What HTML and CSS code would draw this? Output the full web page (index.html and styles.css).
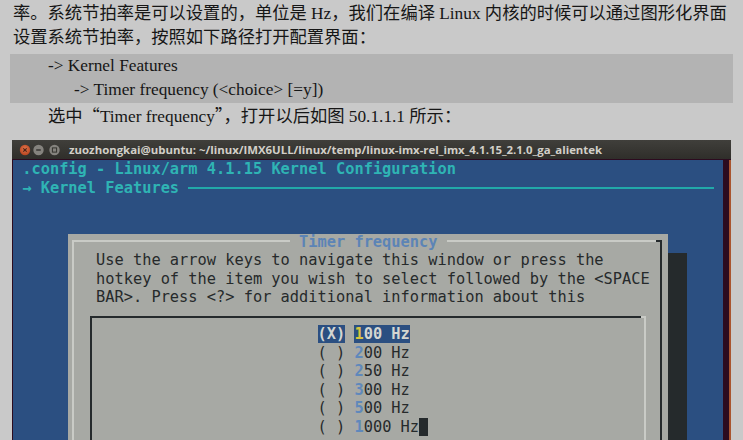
FILE: index.html
```html
<!DOCTYPE html>
<html lang="zh">
<head>
<meta charset="utf-8">
<title>Timer frequency</title>
<link rel="stylesheet" href="styles.css">
</head>
<body>
<div class="doc">
  <p class="line l1">率。系统节拍率是可以设置的，单位是 Hz，我们在编译 Linux 内核的时候可以通过图形化界面</p>
  <p class="line">设置系统节拍率，按照如下路径打开配置界面：</p>
  <div class="code">
    <div class="c1">-&gt; Kernel Features</div>
    <div class="c2">-&gt; Timer frequency (&lt;choice&gt; [=y])</div>
  </div>
  <p class="line l3">选中<span class="q">“</span>Timer frequency<span class="q">”</span>，打开以后如图 50.1.1.1 所示：</p>

  <div class="term">
    <div class="titlebar">
      <svg class="wbtns" width="48" height="12" viewBox="0 0 48 12">
        <defs>
          <radialGradient id="rg" cx="50%" cy="40%" r="60%">
            <stop offset="0" stop-color="#e2774e"/>
            <stop offset="1" stop-color="#b8441f"/>
          </radialGradient>
        </defs>
        <circle cx="6" cy="6" r="5.2" fill="url(#rg)"/>
        <path d="M4.3 4.3 L7.7 7.7 M7.7 4.3 L4.3 7.7" stroke="#4a2418" stroke-width="1.2"/>
        <circle cx="19.5" cy="6" r="5.2" fill="#85837e"/>
        <path d="M17.2 6 H21.8" stroke="#33322e" stroke-width="1.4"/>
        <circle cx="35.5" cy="6" r="5.2" fill="#85837e"/>
        <rect x="33.4" y="3.9" width="4.2" height="4.2" fill="none" stroke="#33322e" stroke-width="1"/>
      </svg>
      <div class="ttl">zuozhongkai@ubuntu: ~/linux/IMX6ULL/linux/temp/linux-imx-rel_imx_4.1.15_2.1.0_ga_alientek</div>
    </div>
    <div class="tbody">
      <div class="screen">
        <div class="row back">.config - Linux/arm 4.1.15 Kernel Configuration</div>
        <div class="row crumb"><span class="ctext">→ Kernel Features </span><span class="hline"></span></div>
        <div class="shadow"></div>
        <div class="dialog">
          <div class="frame">
            <div class="msg">Use the arrow keys to navigate this window or press the<br>hotkey of the item you wish to select followed by the &lt;SPACE<br>BAR&gt;. Press &lt;?&gt; for additional information about this</div>
            <div class="listbox">
              <div class="item"><span class="chk sel">(X)</span> <span class="lbl sel"><span class="key">1</span>00 Hz</span></div>
              <div class="item"><span class="chk">( )</span> <span class="lbl"><span class="key">2</span>00 Hz</span></div>
              <div class="item"><span class="chk">( )</span> <span class="lbl"><span class="key">2</span>50 Hz</span></div>
              <div class="item"><span class="chk">( )</span> <span class="lbl"><span class="key">3</span>00 Hz</span></div>
              <div class="item"><span class="chk">( )</span> <span class="lbl"><span class="key">5</span>00 Hz</span></div>
              <div class="item"><span class="chk">( )</span> <span class="lbl"><span class="key">1</span>000 Hz</span><span class="cursor"></span></div>
            </div>
          </div>
          <div class="dtitle">Timer frequency</div>
        </div>
      </div>
      <div class="sbar"></div>
    </div>
  </div>
</div>
</body>
</html>
```
FILE: styles.css
```css
html, body {
  margin: 0;
  padding: 0;
  height: 440px;
  overflow: hidden;
  background: #c9c9c9;
}

.doc {
  padding: 2px 0 0 13px;
  width: 720px;
  font-family: "Liberation Serif", "Noto Sans CJK SC", serif;
  font-size: 17.3px;
  color: #161616;
}

.line {
  margin: 0;
  line-height: 24px;
  white-space: nowrap;
}

.l3 {
  text-indent: 35px;
}

.q {
  font-family: "Noto Sans CJK SC", sans-serif;
}

.code {
  margin: 4px 0 0 -3px;
  width: 723px;
  height: 49px;
  background: #b3b3b3;
  line-height: 24px;
  white-space: nowrap;
}

.c1 {
  padding-left: 38px;
}

.c2 {
  padding-left: 64px;
}

/* terminal window */
.term {
  margin: 11px 0 0 -1px;
  width: 719px;
}

.titlebar {
  height: 19px;
  display: flex;
  align-items: center;
  background: linear-gradient(#403f3b, #2f2e2a);
}

.wbtns {
  margin-left: 6.5px;
  flex: none;
}

.ttl {
  margin-left: 2.5px;
  font-family: "Open Sans", "DejaVu Sans", sans-serif;
  font-weight: 700;
  font-size: 11.4px;
  color: #d2cfc8;
  white-space: nowrap;
  line-height: 19px;
}

.tbody {
  display: flex;
  border-top: 1px solid #2c0b1f;
  border-left: 1px solid #2c0b1f;
}

.screen {
  position: relative;
  flex: 1;
  height: 290px;
  background: #2b4f81;
  font-family: "DejaVu Sans Mono", monospace;
  font-size: 15.33px;
  line-height: 18.5px;
}

.sbar {
  width: 6px;
  background: #2c0b1f;
  border-right: 2px solid #a9552f;
}

.row {
  height: 18.5px;
  padding-left: 1ch;
  color: #2fb4b4;
  font-weight: 700;
  white-space: pre;
}

.crumb {
  display: flex;
  align-items: center;
}

.hline {
  width: 57ch;
  height: 2px;
  background: #22a9a9;
}

/* dialog */
.shadow {
  position: absolute;
  top: 92.5px;
  left: 71ch;
  width: 2ch;
  height: 200px;
  background: #252a2c;
}

.dialog {
  position: absolute;
  top: 74px;
  left: 6ch;
  width: 65ch;
  height: 216px;
  box-sizing: border-box;
  padding: 6px 6px 0 4px;
  background: #a7a9a4;
  color: #262a2b;
  overflow: hidden;
}

.dtitle {
  position: absolute;
  z-index: 1;
  top: -1px;
  left: 24ch;
  padding: 0 1ch;
  background: #a7a9a4;
  color: #5c84b6;
  font-weight: 700;
  white-space: pre;
}

.frame {
  position: relative;
  height: 240px;
  padding-top: 9px;
  border-top: 2px solid #c9cbc6;
  border-left: 2px solid #c9cbc6;
  border-right: 2px solid #252a2c;
}

.frame::after {
  content: "";
  position: absolute;
  top: -2px;
  right: -2px;
  width: 6px;
  height: 2px;
  background: #252a2c;
}

.msg {
  padding-left: calc(3ch - 6px);
  white-space: nowrap;
}

.listbox {
  position: relative;
  box-sizing: border-box;
  margin: 9px 0 0 calc(2.5ch - 7px);
  width: calc(60ch + 2px);
  height: 150px;
  padding: 7.5px 0 0 calc(24.5ch - 1px);
  border-top: 2px solid #252a2c;
  border-left: 2px solid #252a2c;
  border-right: 2px solid #c9cbc6;
}

.listbox::after {
  content: "";
  position: absolute;
  top: -2px;
  right: -2px;
  width: 5px;
  height: 2px;
  background: #c9cbc6;
}

.item {
  height: 18.5px;
  white-space: pre;
}

.key {
  color: #5f88bb;
  font-weight: 700;
}

.sel {
  background: #2b4f81;
  color: #d4d6d1;
  font-weight: 700;
}

.sel .key {
  color: #d8c540;
}

.cursor {
  display: inline-block;
  width: 1ch;
  height: 18.5px;
  vertical-align: top;
  background: #252a2c;
}
```
